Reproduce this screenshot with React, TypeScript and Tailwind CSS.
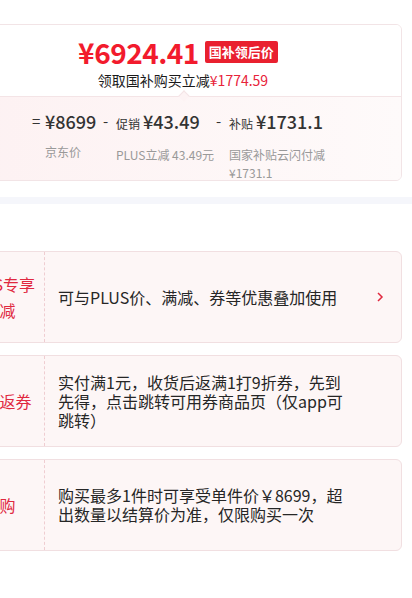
const font = "font-['Noto_Sans_CJK_SC','Noto_Sans',sans-serif]"

interface PartProps {
	sym: string
	tag?: string
	price: string
	sub: string
	width?: string
	nowrap?: boolean
}

const PricePart: React.FC<PartProps> = ({ sym, tag, price, sub, width, nowrap }) => {
	return (
		<div className="flex flex-row items-start">
			<span className="text-[15px] leading-[24px] text-[#333] w-[11px] mr-[2px]">{sym}</span>
			<div className={`flex flex-col ${width ?? ""}`}>
				<div className="flex flex-row items-baseline gap-[3px] leading-[24px] text-[#333]">
					{tag && <span className="text-[12px]">{tag}</span>}
					<span className="text-[18px] font-medium">{price}</span>
				</div>
				<div className={`mt-[10px] text-[12px] leading-[18px] text-[#999] ${nowrap ? "whitespace-nowrap" : ""}`}>
					{sub}
				</div>
			</div>
		</div>
	)
}

interface PromoProps {
	label: string
	text: string
	arrow?: boolean
}

const PromoCard: React.FC<PromoProps> = ({ label, text, arrow }) => {
	return (
		<div className="h-[92px] flex flex-row rounded-md border border-[#f1dfe1] bg-[#fdf6f6]">
			<div className="w-[90px] shrink-0 flex items-center justify-center border-r border-dashed border-[#efcdd1] px-[6px] text-center text-[16px] leading-[26px] text-[#e0283f]">
				{label}
			</div>
			<div className="flex-1 flex flex-row items-center pl-[13px] pr-[14px]">
				<div className="w-[292px] text-[16px] leading-[19px] text-[#262626]">{text}</div>
				{arrow && (
					<svg width="10" height="12" viewBox="0 0 10 12" className="ml-auto mr-[2px]">
						<polyline points="3,2 7,6 3,10" fill="none" stroke="#e0283f" strokeWidth="1.5" />
					</svg>
				)}
			</div>
		</div>
	)
}

export default function App() {
	return (
		<div className={`w-[412px] h-[598px] overflow-hidden bg-white ${font}`}>
			<div className="pt-[24px] ml-[-46px] mr-[10px]">
				<div className="rounded-md border border-[#f2e4e6] overflow-hidden">
					<div className="flex flex-col items-center pt-[9px] pb-[6px] bg-white">
						<div className="flex flex-row items-center h-[36px]">
							<span className="text-[28px] font-bold text-[#f21b2d] tracking-[-0.5px]">¥6924.41</span>
							<span className="ml-[6px] h-[22px] px-[4px] rounded-[2px] bg-[#e9202f] text-white text-[13px] font-bold leading-[22px]">
								国补领后价
							</span>
						</div>
						<div className="text-[14px] leading-[20px] text-[#1a1a1a] pl-[10px]">
							领取国补购买立减<span className="text-[#e8233a]">¥1774.59</span>
						</div>
					</div>
					<div className="relative border-t border-[#f4e4e6] bg-gradient-to-r from-[#fdf1f2] to-[#fefafa] h-[84px] pt-[12px] pl-[77px] flex flex-row gap-[4px]">
						<div className="absolute left-[225px] top-[-5px] w-[8px] h-[8px] rotate-45 border-l border-t border-[#f4e4e6] bg-[#fdf3f4]" />
						<PricePart sym="=" price="¥8699" sub="京东价" width="w-[54px]" />
						<PricePart tag="促销" sym="-" price="¥43.49" sub="PLUS立减 43.49元" width="w-[96px]" nowrap />
						<PricePart tag="补贴" sym="-" price="¥1731.1" sub="国家补贴云闪付减¥1731.1" width="w-[100px]" />
					</div>
				</div>
			</div>
			<div className="mt-[16px] h-[7px] bg-[#f5f6fb]" />
			<div className="mt-[47px] ml-[-46px] mr-[10px] flex flex-col gap-[12px]">
				<PromoCard label="PLUS专享立减" text="可与PLUS价、满减、券等优惠叠加使用" arrow />
				<PromoCard label="下单返券" text="实付满1元，收货后返满1打9折券，先到先得，点击跳转可用券商品页（仅app可跳转）" />
				<PromoCard label="限购" text="购买最多1件时可享受单件价￥8699，超出数量以结算价为准，仅限购买一次" />
			</div>
		</div>
	)
}
